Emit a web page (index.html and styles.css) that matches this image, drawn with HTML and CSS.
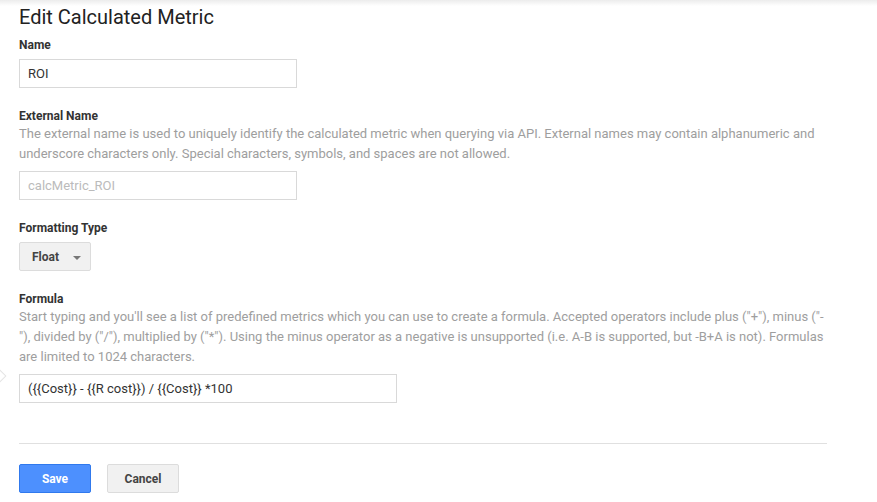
FILE: index.html
```html
<!DOCTYPE html>
<html lang="en">
<head>
    <meta charset="UTF-8">
    <meta name="viewport" content="width=device-width, initial-scale=1.0">
    <title>Edit Calculated Metric</title>
    <link rel="stylesheet" href="styles.css">
</head>
<body>
    <div class="top-shadow"></div>
    <div class="container">
        <h1 class="title">Edit Calculated Metric</h1>

        <div class="field">
            <label for="name">Name</label>
            <input type="text" id="name" class="text-input" value="ROI">
        </div>

        <div class="field">
            <label for="externalName">External Name</label>
            <p class="help">The external name is used to uniquely identify the calculated metric when querying via API. External names may contain alphanumeric and underscore characters only. Special characters, symbols, and spaces are not allowed.</p>
            <input type="text" id="externalName" class="text-input" placeholder="calcMetric_ROI">
        </div>

        <div class="field">
            <label>Formatting Type</label>
            <button class="dropdown">Float <span class="caret"></span></button>
        </div>

        <div class="field formula-field">
            <label for="formula">Formula</label>
            <p class="help">Start typing and you'll see a list of predefined metrics which you can use to create a formula. Accepted operators include plus ("+"), minus ("-"), divided by ("/"), multiplied by ("*"). Using the minus operator as a negative is unsupported (i.e. A-B is supported, but -B+A is not). Formulas are limited to 1024 characters.</p>
            <input type="text" id="formula" class="text-input wide" value="({{Cost}} - {{R cost}}) / {{Cost}} *100">
            <span class="tip-arrow"></span>
        </div>

        <hr class="divider">

        <div class="actions">
            <button class="btn btn-primary">Save</button>
            <button class="btn">Cancel</button>
        </div>
    </div>
</body>
</html>
```

FILE: styles.css
```css
body {
    font-family: Roboto, Arial, sans-serif;
    margin: 0;
    background: #fff;
    color: #333;
}

.top-shadow {
    height: 6px;
    background: linear-gradient(#ececec, #fff);
}

.container {
    width: 808px;
    margin-left: 19px;
}

.title {
    font-size: 20px;
    font-weight: 400;
    color: #222;
    line-height: 22px;
    margin: 0 0 9px;
}

.field {
    margin-bottom: 20px;
}

.field label {
    display: block;
    font-size: 12px;
    font-weight: 700;
    line-height: 16px;
    color: #333;
    margin-bottom: 6px;
}

.help {
    font-size: 13px;
    line-height: 20px;
    color: #9e9e9e;
    margin: -6px 0 7px;
}

.text-input {
    display: block;
    width: 278px;
    height: 29px;
    box-sizing: border-box;
    border: 1px solid #d9d9d9;
    padding: 0 8px;
    font-family: Roboto, Arial, sans-serif;
    font-size: 13px;
    color: #333;
    outline: none;
}

.text-input::placeholder {
    color: #bbb;
}

.text-input.wide {
    width: 378px;
}

.formula-field {
    position: relative;
    margin-bottom: 40px;
}

.tip-arrow {
    position: absolute;
    left: -27px;
    top: 79px;
    width: 10px;
    height: 10px;
    border: 1px solid #e4e4e4;
    transform: rotate(45deg);
}

.dropdown {
    display: flex;
    align-items: center;
    width: 72px;
    height: 29px;
    padding: 0 0 0 12px;
    background: #f1f1f1;
    border: 1px solid #dcdcdc;
    border-radius: 2px;
    font-family: Roboto, Arial, sans-serif;
    font-size: 12px;
    font-weight: 700;
    color: #444;
}

.caret {
    margin-left: 14px;
    margin-top: 2px;
    border-left: 4px solid transparent;
    border-right: 4px solid transparent;
    border-top: 4px solid #777;
}

.divider {
    border: none;
    border-top: 1px solid #e0e0e0;
    margin: 0 0 20px;
}

.actions {
    display: flex;
    gap: 16px;
}

.btn {
    width: 72px;
    height: 29px;
    background: #f1f1f1;
    border: 1px solid #dcdcdc;
    border-radius: 2px;
    font-family: Roboto, Arial, sans-serif;
    font-size: 12px;
    font-weight: 700;
    color: #444;
    cursor: pointer;
}

.btn-primary {
    background: #4d90fe;
    border-color: #3079ed;
    color: #fff;
}
```
